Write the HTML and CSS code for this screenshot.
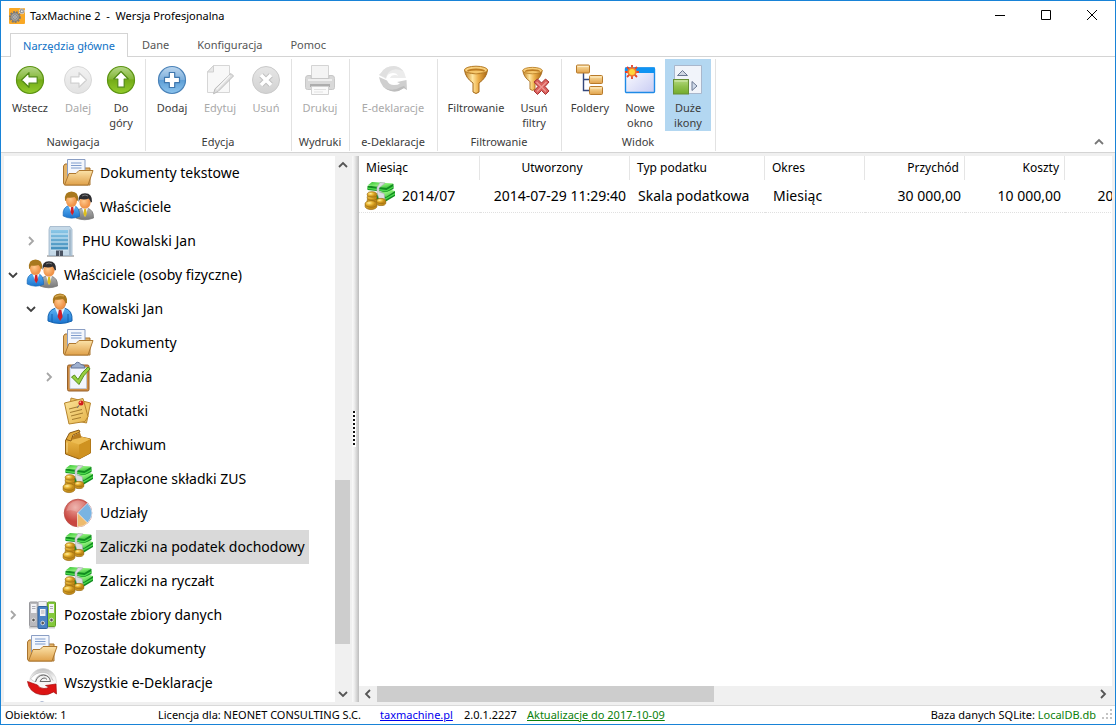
FILE: index.html
```html
<!DOCTYPE html>
<html lang="pl">
<head>
<meta charset="utf-8">
<title>TaxMachine 2</title>
<link rel="stylesheet" href="styles.css">
</head>
<body>
<svg class="sprite" aria-hidden="true">
  <defs>
    <linearGradient id="g-green" x1="0" y1="0" x2="0" y2="1"><stop offset="0" stop-color="#b5d68a"/><stop offset=".45" stop-color="#86b83a"/><stop offset=".5" stop-color="#74ab17"/><stop offset="1" stop-color="#93cc2c"/></linearGradient>
    <linearGradient id="g-blue" x1="0" y1="0" x2="0" y2="1"><stop offset="0" stop-color="#bcd6ee"/><stop offset=".48" stop-color="#7fb0dc"/><stop offset=".52" stop-color="#5f9fd6"/><stop offset="1" stop-color="#8cc4ee"/></linearGradient>
    <linearGradient id="g-gray" x1="0" y1="0" x2="0" y2="1"><stop offset="0" stop-color="#e6e6e6"/><stop offset="1" stop-color="#d2d2d2"/></linearGradient>
    <linearGradient id="g-pale" x1="0" y1="0" x2="0" y2="1"><stop offset="0" stop-color="#f2f2f2"/><stop offset="1" stop-color="#e2e2e2"/></linearGradient>
    <linearGradient id="g-folder" x1="0" y1="0" x2="0" y2="1"><stop offset="0" stop-color="#fbe2a8"/><stop offset="1" stop-color="#e0a14a"/></linearGradient>
    <linearGradient id="g-gold" x1="0" y1="0" x2="1" y2="0"><stop offset="0" stop-color="#c07c1c"/><stop offset=".35" stop-color="#ffe6a0"/><stop offset=".6" stop-color="#edb04a"/><stop offset="1" stop-color="#a86410"/></linearGradient>
    <linearGradient id="g-box" x1="0" y1="0" x2="0" y2="1"><stop offset="0" stop-color="#f0bd4e"/><stop offset="1" stop-color="#c98a1c"/></linearGradient>
    <linearGradient id="g-suit" x1="0" y1="0" x2="0" y2="1"><stop offset="0" stop-color="#5db4f5"/><stop offset="1" stop-color="#1a74cf"/></linearGradient>
    <linearGradient id="g-greysuit" x1="0" y1="0" x2="0" y2="1"><stop offset="0" stop-color="#b4b4b4"/><stop offset="1" stop-color="#787878"/></linearGradient>
    <radialGradient id="g-face" cx=".4" cy=".4"><stop offset="0" stop-color="#ffc98c"/><stop offset="1" stop-color="#f0944a"/></radialGradient>
    <linearGradient id="g-building" x1="0" y1="0" x2="0" y2="1"><stop offset="0" stop-color="#8cc8e8"/><stop offset="1" stop-color="#3f8cba"/></linearGradient>
    <linearGradient id="g-note" x1="0" y1="0" x2="1" y2="1"><stop offset="0" stop-color="#fbe59c"/><stop offset="1" stop-color="#e6b44a"/></linearGradient>
    <linearGradient id="g-window" x1="0" y1="0" x2="1" y2="1"><stop offset="0" stop-color="#ffffff"/><stop offset="1" stop-color="#c8ccf4"/></linearGradient>
    <linearGradient id="g-bill" x1="0" y1="0" x2="1" y2="1"><stop offset="0" stop-color="#2fc02f"/><stop offset=".5" stop-color="#8cf078"/><stop offset="1" stop-color="#28b42c"/></linearGradient>
    <radialGradient id="g-red" cx=".4" cy=".3"><stop offset="0" stop-color="#eba29a"/><stop offset="1" stop-color="#c9463f"/></radialGradient>
    <linearGradient id="g-sphere" x1="0" y1="0" x2="0" y2="1"><stop offset="0" stop-color="#bdbdbd"/><stop offset=".35" stop-color="#f4f4f4"/><stop offset="1" stop-color="#ffffff"/></linearGradient>
    <linearGradient id="g-square" x1="0" y1="0" x2="0" y2="1"><stop offset="0" stop-color="#b4d880"/><stop offset=".5" stop-color="#8fc04c"/><stop offset="1" stop-color="#74ac2c"/></linearGradient>
    <radialGradient id="g-coin" cx=".35" cy=".35"><stop offset="0" stop-color="#fff0a4"/><stop offset=".5" stop-color="#eebc3c"/><stop offset="1" stop-color="#c48c18"/></radialGradient>
  </defs>

  <symbol id="i-app" viewBox="0 0 16 16">
    <rect width="16" height="16" rx="1" fill="#f9a825"/>
    <circle cx="6" cy="9" r="5" fill="none" stroke="#7a7a7a" stroke-width="1.800" stroke-dasharray="1.900 1.100"/>
    <circle cx="6" cy="9" r="4.200" fill="#a6a6a6" stroke="#6c6c6c" stroke-width=".8"/><circle cx="6" cy="9" r="2.100" fill="#e4e4e4" stroke="#666" stroke-width=".7"/><circle cx="6" cy="9" r=".8" fill="#555"/>
    <circle cx="12.800" cy="3.200" r="2.500" fill="#8c8c8c" stroke="#dedede" stroke-width="1.200" stroke-dasharray="1.200 .8"/><circle cx="12.800" cy="3.200" r="1" fill="#e8e8e8"/>
  </symbol>
  <symbol id="i-arrow" viewBox="0 0 32 32">
    <path d="M7.500 16 15 8.700v4.100h8.200v6.400H15v4.100z" fill="#fff" stroke="currentColor" stroke-width="1.200" stroke-linejoin="round"/>
  </symbol>
  <symbol id="i-back" viewBox="0 0 32 32">
    <circle cx="16" cy="16" r="13.500" fill="url(#g-green)" stroke="#5c9412" stroke-width="1.200"/>
    <use href="#i-arrow" color="#518a14"/>
  </symbol>
  <symbol id="i-forward" viewBox="0 0 32 32">
    <circle cx="16" cy="16" r="13.500" fill="url(#g-pale)" stroke="#d8d8d8"/>
    <use href="#i-arrow" color="#d0d0d0" transform="rotate(180 16 16)"/>
  </symbol>
  <symbol id="i-up" viewBox="0 0 32 32">
    <circle cx="16" cy="16" r="13.500" fill="url(#g-green)" stroke="#5c9412" stroke-width="1.200"/>
    <use href="#i-arrow" color="#518a14" transform="rotate(90 16 16)"/>
  </symbol>
  <symbol id="i-add" viewBox="0 0 32 32">
    <circle cx="16" cy="16" r="13.500" fill="url(#g-blue)" stroke="#4a82b8" stroke-width="1.200"/>
    <path d="M13.300 8.500h5.400v4.800h4.800v5.400h-4.800v4.800h-5.400v-4.800H8.500v-5.400h4.800z" fill="#fff" stroke="#3f77ae" stroke-width="1.200" stroke-linejoin="round"/>
  </symbol>
  <symbol id="i-edit" viewBox="0 0 32 32">
    <path d="M9.500 1.500h16v27h-22V8z" fill="#f8f8f8" stroke="#d6d6d6"/><path d="M9.500 1.500v6.500h-6z" fill="#e8e8e8" stroke="#d0d0d0"/>
    <path d="M27 9.500l2.500 2.500L14 27.500l-4.500 2.300 1.500-5z" fill="#dedede" stroke="#bcbcbc"/><path d="M26 11.500 12.500 25.500" stroke="#f6f6f6" stroke-width="1.400"/>
  </symbol>
  <symbol id="i-remove" viewBox="0 0 32 32">
    <circle cx="16" cy="16" r="13.500" fill="url(#g-gray)" stroke="#cacaca"/>
    <path d="M11.200 11.200l9.600 9.600m0-9.600-9.600 9.600" stroke="#c0c0c0" stroke-width="5.500"/><path d="M11 11l10 10m0-10L11 21" stroke="#fff" stroke-width="3.600"/>
  </symbol>
  <symbol id="i-print" viewBox="0 0 32 32">
    <path d="M7.500 1.500h17v13h-17z" fill="#f4f4f4" stroke="#d4d4d4"/>
    <path d="M4 11.500h3v3h18v-3h3q2.500 0 2.500 3v9q0 2-2 2h-25q-2 0-2-2v-9q0-3 2.500-3z" fill="#d9d9d9" stroke="#c8c8c8"/>
    <path d="M4 16h24" stroke="#efefef" stroke-width="2"/><path d="M6 21.500h20" stroke="#adadad" stroke-width="3"/>
    <path d="M7.500 22.500h17v8h-17z" fill="#fafafa" stroke="#d2d2d2"/><path d="M10 25.500h12M10 28h9" stroke="#e2e2e2"/>
  </symbol>
  <symbol id="i-edek-gray" viewBox="0 0 32 32">
    <path d="M4 9Q8 2 17 2q10 1 12 12H13q1-3 5-3 2 0 3 1-1-3-5-3-6 0-7 6L2 11z" fill="#ececec"/>
    <path d="M4 9Q8 2 17 2q6 .5 9 5-9-4-14 1-2 2-3 6L2 11z" fill="#e0e0e0"/>
    <path d="M2 13l8 3.500Q12 21 17 21q4 0 6-1.500L20 18l9.500-2 .5 10-3-2q-6 4.500-13 3Q4 25 2 13z" fill="#cfcfcf"/>
    <path d="M8 24q8 4 16-1l3-1 3 4-3-2q-6 4.500-13 3-4-.8-6-3z" fill="#bdbdbd"/>
  </symbol>
  <symbol id="i-funnel" viewBox="0 0 32 32">
    <path d="M4.500 6q1 8 8.500 13v9q3 3 6 0v-9q7.500-5 8.500-13z" fill="url(#g-gold)" stroke="#a4691a"/>
    <ellipse cx="16" cy="6" rx="11.500" ry="3.800" fill="#f8cf7c" stroke="#b57b24"/><ellipse cx="16" cy="6.800" rx="9" ry="2.300" fill="#bd7c22"/><path d="M7.500 7.400q8.500 3.600 17 0-8.500-2-17 0z" fill="#f5c66a"/>
  </symbol>
  <symbol id="i-nofilter" viewBox="0 0 32 32">
    <use href="#i-funnel" x="1" y="0" width="27" height="30"/>
    <path d="M16 18l3.500-3 4 4 4-4 3.500 3-4 4.500 4 4.500-3.500 3.500-4-4-4 4-3.500-3.500 4-4.500z" fill="#d9605c" stroke="#a83434"/><path d="M18.500 18l9.500 9.500m.5-9.500-9.500 9.500" stroke="#ef9a94" stroke-width="1.300"/>
  </symbol>
  <symbol id="i-tree" viewBox="0 0 32 32">
    <path d="M9.500 9v17.500H17M9.500 15.500H17" fill="none" stroke="#34487c" stroke-width="1.400"/>
    <g fill="url(#g-folder)" stroke="#b87a2a"><rect x="2.500" y="1" width="13" height="8" rx="1"/><rect x="15.500" y="11.500" width="13" height="8" rx="1"/><rect x="15.500" y="22.500" width="13" height="8" rx="1"/></g>
    <path d="M3.500 2.500h11M16.500 13h11M16.500 24h11" stroke="#fdebc4"/>
  </symbol>
  <symbol id="i-newwin" viewBox="0 0 32 32">
    <rect x="1.500" y="4" width="29" height="24.500" rx="1" fill="url(#g-window)" stroke="#1e8ae6" stroke-width="1.400"/><path d="M1 3.500h30V9H1z" fill="#0f93f2"/>
    <g stroke="#e4432c" stroke-width="1.800"><path d="M8 1v14M1 8h14M3 3l10 10M13 3 3 13"/></g><circle cx="8" cy="8" r="4.700" fill="#f07a30"/><circle cx="8" cy="8" r="3" fill="#ffd63c"/>
  </symbol>
  <symbol id="i-bigicons" viewBox="0 0 32 32">
    <path d="M2.500 1.500h27v28h-14v-14h-13z" fill="#f1f4fa" stroke="#a9b7cc"/><rect x="1.500" y="15.500" width="15" height="14.500" fill="url(#g-square)" stroke="#668f34"/><path d="M2.500 17h13" stroke="#d6ecb4"/>
    <path d="M5.500 11.500l5-5 5 5z" fill="#cfd6e2" stroke="#6b7892"/><path d="M20 17.500l5 4.500-5 4.500z" fill="#cfdaea" stroke="#6b7892"/>
  </symbol>
  <symbol id="i-folder" viewBox="0 0 32 32">
    <path d="M1.500 9l1.500-2h3v-1h16v5h6v17h-24q-2.500 0-2.500-2z" fill="#e5b468" stroke="#a87430"/>
    <path d="M5.500 2.500h17.500v17H5.500z" fill="#f4f7fd" stroke="#8a9ec4"/><path d="M9 6h10.500M9 8.500h10.500M9 11h10.500" stroke="#7f9ccc"/>
    <path d="M7 16.500h7l3-3h14l-5 14.500H2.500z" fill="url(#g-folder)" stroke="#ae7830" stroke-linejoin="round"/>
  </symbol>
  <symbol id="i-person" viewBox="0 0 32 32">
    <path d="M4 28q-1-11 8-13h8q9 2 8 13-12 5-24 0z" fill="url(#g-suit)" stroke="#1563b0"/><path d="M11 15l5 12 5-12z" fill="#e8f1fb"/><path d="M14.800 17h2.600l1.200 7-2.500 4-2.500-4z" fill="#cf1f28"/>
    <path d="M8 21v8m16-8v8" stroke="#1460ac"/>
    <ellipse cx="16" cy="9.500" rx="5.800" ry="7" fill="url(#g-face)" stroke="#c4742e" stroke-width=".6"/><path d="M9 10Q7.500 1 16 .6q8 .4 7 9.400l-1.500.5q-1-4-3-4.500-4 1-7 .4-1.500 1.600-1.500 4z" fill="#a8781e"/><path d="M11 4q4-3 9-1" fill="none" stroke="#d2a44c" stroke-width="1.400"/>
  </symbol>
  <symbol id="i-people" viewBox="0 0 32 32">
    <path d="M14 27q-1-8 6-10h5q7 2 6.500 10-9 3.500-17.500 0z" fill="url(#g-greysuit)" stroke="#6e6e6e" stroke-width=".7"/><path d="M20 17l3 9 3-9z" fill="#f6f6f6"/><path d="M22.200 18h1.800l.8 5-1.700 3-1.700-3z" fill="#e0c01c"/>
    <ellipse cx="23" cy="11.500" rx="5.600" ry="6.200" fill="url(#g-face)"/><path d="M16.500 11q-1-8.500 6.500-8.700 7.500.2 7 8.700l-1.200.5q-.8-3-2.300-4-3 1.500-8.500.5z" fill="#2c2c30"/><path d="M20 5q3-2 6 0" fill="none" stroke="#777" stroke-width="1"/>
    <path d="M1.200 25q-1-9 6.100-10.500h4.500Q18 16 17.500 25.500q-8.500 3.500-16.300-.5z" fill="url(#g-suit)" stroke="#1769b8" stroke-width=".7"/><path d="M6.500 15l3.500 9 3.500-9z" fill="#e8f1fb"/><path d="M9.200 16h2l.8 5-1.800 3.500L8.400 21z" fill="#d01f28"/>
    <ellipse cx="9.500" cy="9.500" rx="5.600" ry="6.600" fill="url(#g-face)"/><path d="M3 9.500Q2 .8 9.500.6q7.500.2 6.500 8.900l-1.200.5q-.8-3-2.300-4-3 1.200-7 .6Q4 8 4 10z" fill="#a8781e"/>
  </symbol>
  <symbol id="i-building" viewBox="0 0 32 32">
    <path d="M3 31h27" stroke="#bcbcbc" stroke-width="2"/>
    <path d="M6 1.500h20l2 3v26H5v-26z" fill="#c5d9e8" stroke="#9db2c6" stroke-width=".8"/>
    <path d="M7 5h17v20H7z" fill="url(#g-building)"/><path d="M7 9h17M7 13h17M7 17h17M7 21h17M7 25h17" stroke="#dceef8" stroke-width="1"/>
    <path d="M26 4.500v25.500" stroke="#a4bacc" stroke-width="2"/><rect x="12" y="25.500" width="7" height="5.500" fill="#4a5362"/><path d="M15.500 26v5" stroke="#a4aebb"/>
  </symbol>
  <symbol id="i-tasks" viewBox="0 0 32 32">
    <rect x="5.500" y="4" width="21.500" height="26" rx="1.500" fill="#cf8c42" stroke="#96602a"/><path d="M8 6.500h16.500v21H8z" fill="#f3f6fd" stroke="#bcc6dc" stroke-width=".8"/>
    <path d="M9 7q0-3.500 3.500-3.500 3-4.500 6.500 0 4 0 4 3.500z" fill="#9fb0ce" stroke="#62759c"/>
    <path d="M9.500 16l3-2 3.500 4.500Q20 10.500 26 6q1.500.5 2 2Q21 14 17 23.500z" fill="#97cf3e" stroke="#558e1c" stroke-linejoin="round"/>
  </symbol>
  <symbol id="i-notes" viewBox="0 0 32 32">
    <path d="M9 3l19.500 5-4 20-18-4z" fill="#f0c868" stroke="#b98630" stroke-linejoin="round"/>
    <path d="M2.500 8L21 3.500l5 18-3 5L7 29z" fill="url(#g-note)" stroke="#b5842c" stroke-linejoin="round"/>
    <path d="M7 14l10-2.500M8 17.500l12-3M9 21l12-3M10 24.500l9-2" stroke="#a47b2e"/><path d="M18 9l-3 4" stroke="#777"/><circle cx="19" cy="8" r="2.500" fill="#d01d1d"/><circle cx="18.300" cy="7.200" r=".9" fill="#ff9b8b"/>
  </symbol>
  <symbol id="i-box" viewBox="0 0 32 32">
    <path d="M3.500 11l11-4 14 3v14L17 30 3.500 25z" fill="url(#g-box)" stroke="#946112" stroke-linejoin="round"/>
    <path d="M17 15.500l11.500-5.500v14L17 30z" fill="#cf9220"/><path d="M3.500 11L17 15.500l11.500-5.500-12-3z" fill="#edbc52"/>
    <path d="M4 10.500L7.500 4 17 1l1 2-7 3-2 6z" fill="#e2a838" stroke="#8a5a14" stroke-linejoin="round"/><path d="M9 11l3-5 6-2.500 1.500 5z" fill="#b87c1e"/><path d="M5 13.500v10" stroke="#f7d98c"/>
  </symbol>
  <symbol id="i-money" viewBox="0 0 32 32">
    <path d="M11 15l20-4v5l-10 6-9-1z" fill="#128c20"/><path d="M12 14l12-5 7 2-9 6z" fill="url(#g-bill)"/><path d="M21 18.500l10-5.500v1.500L21 20z" fill="#4cd94c"/>
    <path d="M3.500 6l26-2v5l-7 3-19-2z" fill="#128c20"/><path d="M3.500 5.500L8 2l21.500 1.500-7 4.500z" fill="url(#g-bill)"/><path d="M3.500 7.500l19 2.500 7-4v1.500l-7 4-19-2.500z" fill="#4cd94c"/>
    <path d="M16 2.500l5 .5-6 5v4l5 1.500 1 6-5 1.500-2-5-1-4V7.500z" fill="#dcdce2" stroke="#a8a8b2" stroke-width=".6"/>
    <g fill="url(#g-coin)" stroke="#9a6c10" stroke-width=".7"><ellipse cx="17" cy="22.800" rx="4.800" ry="2.800"/><ellipse cx="17" cy="21" rx="4.800" ry="2.600"/><ellipse cx="8" cy="20.500" rx="4.800" ry="3"/><ellipse cx="8" cy="17.500" rx="4.800" ry="3"/><ellipse cx="8" cy="14.500" rx="4.800" ry="2.800"/><ellipse cx="7" cy="26" rx="6" ry="3.600"/><ellipse cx="7" cy="24" rx="6" ry="3.400"/></g>
  </symbol>
  <symbol id="i-pie" viewBox="0 0 32 32">
    <circle cx="16" cy="16" r="13.800" fill="url(#g-red)" stroke="#b84a44" stroke-width=".8"/>
    <path d="M15.500 16L25.500 6q9 10 0 20z" fill="#7ab4e2" stroke="#e8f0f8" stroke-width=".7"/><path d="M15.500 16l10 10q-4 4-10 3.800z" fill="#eebb6e" stroke="#f8ecd8" stroke-width=".7"/><path d="M4.500 14Q6 5 16 3.500q5 0 8 2.500l-9 9q-5-3-10.500-1z" fill="#fff" opacity=".2"/>
  </symbol>
  <symbol id="i-binders" viewBox="0 0 32 32">
    <path d="M3 28.500h26" stroke="#cfcfcf" stroke-width="2"/>
    <rect x="3.500" y="3" width="8.500" height="24.500" rx="1" fill="#b9b9bd" stroke="#98989c"/><rect x="21.500" y="3" width="8" height="24.500" rx="1" fill="#84c83c" stroke="#63a026"/><path d="M12.500 2.500h8v7h-8z" fill="#f2f2f4" stroke="#c4c4c8"/><rect x="12" y="7.500" width="9.500" height="22" rx="1" fill="#4a82c4" stroke="#2e609c"/>
    <g fill="#f3f3f6"><rect x="5" y="5" width="5.500" height="9"/><rect x="23" y="5" width="5" height="9"/><rect x="14" y="10" width="5.500" height="7"/></g><path d="M6 7.500h3.500M6 9.500h3.500M24 7.500h3M24 9.500h3M15 12h3.500M15 14h3.500" stroke="#9a9aa4" stroke-width=".8"/>
    <g fill="#555" stroke="#eee" stroke-width=".8"><circle cx="7.500" cy="21" r="1.800"/><circle cx="25.500" cy="21" r="1.800"/><circle cx="16.700" cy="24" r="1.800"/></g>
  </symbol>
  <symbol id="i-edek" viewBox="0 0 32 32">
    <circle cx="17" cy="15" r="13.500" fill="url(#g-sphere)" stroke="#d4d4d4" stroke-width=".6"/>
    <path d="M4.500 12Q9 5 18 5.500q6 .5 9 8Q22 7 16 7.500q-6 .5-7 7.500z" fill="#fff" stroke="#b4b4b4" stroke-width=".6"/>
    <path d="M9.500 15q2-7 8-7 6 .5 7 6.500H14q1.500-3.500 4-3.500 2 0 3 1.500" fill="none" stroke="#6a6a6a" stroke-width="1"/>
    <path d="M1.500 14.500l10 3.500q2 3.500 6.500 3.500 3 0 5-1.500l-3.500-1.500L30 17l.5 10-3-2q-6 4-13 2.500Q3 25.500 1.500 14.500z" fill="#dc1414" stroke="#a80c0c" stroke-width=".7"/>
  </symbol>
  <symbol id="i-blueball" viewBox="0 0 32 32"><circle cx="16" cy="9" r="8" fill="#6a86c4" stroke="#48649c"/></symbol>
  <symbol id="i-chev" viewBox="0 0 10 10"><path d="M3 1l4 4-4 4" fill="none" stroke="currentColor" stroke-width="1.800"/></symbol>
</svg>

<div class="window">
  <header class="titlebar">
    <svg class="app-icon"><use href="#i-app"/></svg>
    <span class="title">TaxMachine 2 &nbsp;- &nbsp;Wersja Profesjonalna</span>
    <div class="caption-buttons">
      <button type="button" aria-label="Minimalizuj"><svg viewBox="0 0 12 12"><path d="M1 5.500h10" stroke="#000"/></svg></button>
      <button type="button" aria-label="Maksymalizuj"><svg viewBox="0 0 12 12"><path d="M1.500 .5h9v9h-9z" fill="none" stroke="#000"/></svg></button>
      <button type="button" aria-label="Zamknij"><svg viewBox="0 0 12 12"><path d="M1 0l10 10M11 0 1 10" stroke="#000"/></svg></button>
    </div>
  </header>

  <nav class="tabs">
    <button type="button" class="tab tab-active">Narzędzia główne</button>
    <button type="button" class="tab">Dane</button>
    <button type="button" class="tab">Konfiguracja</button>
    <button type="button" class="tab">Pomoc</button>
  </nav>

  <section class="ribbon">
    <div class="group">
      <div class="tools">
        <button type="button" class="tool w50"><svg><use href="#i-back"/></svg>Wstecz</button>
        <button type="button" class="tool w46" disabled><svg><use href="#i-forward"/></svg>Dalej</button>
        <button type="button" class="tool w40"><svg><use href="#i-up"/></svg>Do<br>góry</button>
      </div>
      <div class="group-name">Nawigacja</div>
    </div>
    <div class="group">
      <div class="tools">
        <button type="button" class="tool w46"><svg><use href="#i-add"/></svg>Dodaj</button>
        <button type="button" class="tool w50" disabled><svg><use href="#i-edit"/></svg>Edytuj</button>
        <button type="button" class="tool w42" disabled><svg><use href="#i-remove"/></svg>Usuń</button>
      </div>
      <div class="group-name">Edycja</div>
    </div>
    <div class="group">
      <div class="tools">
        <button type="button" class="tool w50" disabled><svg><use href="#i-print"/></svg>Drukuj</button>
      </div>
      <div class="group-name">Wydruki</div>
    </div>
    <div class="group">
      <div class="tools">
        <button type="button" class="tool w80" disabled><svg><use href="#i-edek-gray"/></svg>E-deklaracje</button>
      </div>
      <div class="group-name">e-Deklaracje</div>
    </div>
    <div class="group">
      <div class="tools">
        <button type="button" class="tool w70"><svg><use href="#i-funnel"/></svg>Filtrowanie</button>
        <button type="button" class="tool w46"><svg><use href="#i-nofilter"/></svg>Usuń<br>filtry</button>
      </div>
      <div class="group-name">Filtrowanie</div>
    </div>
    <div class="group">
      <div class="tools">
        <button type="button" class="tool w50"><svg><use href="#i-tree"/></svg>Foldery</button>
        <button type="button" class="tool w50"><svg><use href="#i-newwin"/></svg>Nowe<br>okno</button>
        <button type="button" class="tool w46 tool-on" aria-pressed="true"><svg><use href="#i-bigicons"/></svg>Duże<br>ikony</button>
      </div>
      <div class="group-name">Widok</div>
    </div>
    <button type="button" class="collapse" aria-label="Zwiń wstążkę"><svg class="chev up"><use href="#i-chev"/></svg></button>
  </section>

  <main class="work">
    <aside class="tree-pane">
      <ul class="tree">
        <li class="node level-2"><span class="twist"></span><svg><use href="#i-folder"/></svg><a href="#n1">Dokumenty tekstowe</a></li>
        <li class="node level-2"><span class="twist"></span><svg><use href="#i-people"/></svg><a href="#n2">Właściciele</a></li>
        <li class="node level-1"><button type="button" class="twist" aria-label="Rozwiń"><svg class="chev"><use href="#i-chev"/></svg></button><svg><use href="#i-building"/></svg><a href="#n3">PHU Kowalski Jan</a></li>
        <li class="node"><button type="button" class="twist" aria-label="Zwiń"><svg class="chev down"><use href="#i-chev"/></svg></button><svg><use href="#i-people"/></svg><a href="#n4">Właściciele (osoby fizyczne)</a></li>
        <li class="node level-1"><button type="button" class="twist" aria-label="Zwiń"><svg class="chev down"><use href="#i-chev"/></svg></button><svg><use href="#i-person"/></svg><a href="#n5">Kowalski Jan</a></li>
        <li class="node level-2"><span class="twist"></span><svg><use href="#i-folder"/></svg><a href="#n6">Dokumenty</a></li>
        <li class="node level-2"><button type="button" class="twist" aria-label="Rozwiń"><svg class="chev"><use href="#i-chev"/></svg></button><svg><use href="#i-tasks"/></svg><a href="#n7">Zadania</a></li>
        <li class="node level-2"><span class="twist"></span><svg><use href="#i-notes"/></svg><a href="#n8">Notatki</a></li>
        <li class="node level-2"><span class="twist"></span><svg><use href="#i-box"/></svg><a href="#n9">Archiwum</a></li>
        <li class="node level-2"><span class="twist"></span><svg><use href="#i-money"/></svg><a href="#n10">Zapłacone składki ZUS</a></li>
        <li class="node level-2"><span class="twist"></span><svg><use href="#i-pie"/></svg><a href="#n11">Udziały</a></li>
        <li class="node level-2"><span class="twist"></span><svg><use href="#i-money"/></svg><a href="#n12" class="selected">Zaliczki na podatek dochodowy</a></li>
        <li class="node level-2"><span class="twist"></span><svg><use href="#i-money"/></svg><a href="#n13">Zaliczki na ryczałt</a></li>
        <li class="node"><button type="button" class="twist" aria-label="Rozwiń"><svg class="chev"><use href="#i-chev"/></svg></button><svg><use href="#i-binders"/></svg><a href="#n14">Pozostałe zbiory danych</a></li>
        <li class="node"><span class="twist"></span><svg><use href="#i-folder"/></svg><a href="#n15">Pozostałe dokumenty</a></li>
        <li class="node"><span class="twist"></span><svg><use href="#i-edek"/></svg><a href="#n16">Wszystkie e-Deklaracje</a></li>
        <li class="node"><span class="twist"></span><svg><use href="#i-blueball"/></svg></li>
      </ul>
      <div class="vscroll">
        <button type="button" aria-label="W górę"><svg class="chev up"><use href="#i-chev"/></svg></button>
        <div class="track"><div class="thumb"></div></div>
        <button type="button" aria-label="W dół"><svg class="chev down"><use href="#i-chev"/></svg></button>
      </div>
    </aside>
    <div class="splitter"><div class="grip"></div></div>
    <section class="list-pane">
      <div class="list">
        <table>
          <colgroup><col class="c121"><col class="c150"><col class="c135"><col class="c100"><col class="c100"><col class="c100"><col class="c100"></colgroup>
          <thead><tr><th>Miesiąc</th><th class="mid">Utworzony</th><th>Typ podatku</th><th>Okres</th><th class="num">Przychód</th><th class="num">Koszty</th><th></th></tr></thead>
          <tbody><tr><td><div class="first"><svg><use href="#i-money"/></svg>2014/07</div></td><td class="num">2014-07-29 11:29:40</td><td>Skala podatkowa</td><td>Miesiąc</td><td class="num">30 000,00</td><td class="num">10 000,00</td><td class="num">20 000,00</td></tr></tbody>
        </table>
      </div>
      <div class="hscroll">
        <button type="button" aria-label="W lewo"><svg class="chev left"><use href="#i-chev"/></svg></button>
        <div class="track"><div class="thumb"></div></div>
        <button type="button" aria-label="W prawo"><svg class="chev"><use href="#i-chev"/></svg></button>
      </div>
    </section>
  </main>

  <footer class="status">
    <span class="count">Obiektów: 1</span>
    <span class="licence">Licencja dla: NEONET CONSULTING S.C.</span>
    <span class="site"><a href="#www">taxmachine.pl</a></span>
    <span class="version">2.0.1.2227</span>
    <a href="#update" class="update">Aktualizacje do 2017-10-09</a>
    <span class="db">Baza danych SQLite: <span class="db-name">LocalDB.db</span></span>
    <svg class="sizer" viewBox="0 0 12 12"><path d="M8 0h2v2H8zM4 4h2v2H4zM8 4h2v2H8zM0 8h2v2H0zM4 8h2v2H4zM8 8h2v2H8z" fill="#c4c4c4"/></svg>
  </footer>
</div>
</body>
</html>
```

FILE: styles.css
```css
* { box-sizing: border-box; }
html, body { height: 100%; }
body {
  margin: 0;
  background: #fff;
  color: #000;
  font: 11px/16px "Noto Sans", "Open Sans", sans-serif;
}
button {
  margin: 0;
  padding: 0;
  border: 0;
  background: none;
  color: inherit;
  font: inherit;
}
.sprite { position: absolute; width: 0; height: 0; }

.window {
  display: flex;
  flex-direction: column;
  height: 100%;
  border: 1px solid #1883d7;
  overflow: hidden;
}

/* Title bar */
.titlebar { display: flex; align-items: center; height: 30px; flex: none; padding-left: 8px; }
.app-icon { width: 16px; height: 16px; margin-right: 5px; }
.caption-buttons { display: flex; margin-left: auto; }
.caption-buttons button { display: grid; place-items: center; width: 46px; height: 30px; }
.caption-buttons svg { width: 12px; height: 12px; }

/* Ribbon */
.tabs {
  display: flex;
  flex: none;
  height: 26px;
  padding: 2px 9px 0;
  border-bottom: 1px solid #d4d4d4;
  color: #555;
}
.tab { height: 24px; padding: 0 14px; border: 0 solid #d4d4d4; }
.tab-active {
  min-width: 118px;
  padding: 0 11px;
  border-width: 1px 1px 0;
  background: #fff;
  color: #0f72c6;
}
.ribbon {
  position: relative;
  display: flex;
  flex: none;
  padding: 2px 1px 1px;
  border-bottom: 1px solid #d4d4d4;
  color: #3b3b3b;
}
.group { padding: 0 4px 0 3px; border-right: 1px solid #e2e2e2; }
.tools { display: flex; height: 72px; }
.tool {
  display: flex;
  flex-direction: column;
  align-items: center;
  padding-top: 5px;
  line-height: 15px;
  white-space: nowrap;
}
.tool svg { width: 32px; height: 32px; flex: none; margin-bottom: 4px; }
.tool:disabled { color: #a9a9a9; }
.tool-on { background: #b3d7f1; }
.w40 { width: 40px; }
.w42 { width: 42px; }
.w46 { width: 46px; }
.w50 { width: 50px; }
.w70 { width: 70px; }
.w80 { width: 80px; }
.group-name { padding: 3px 0 1px; text-align: center; white-space: nowrap; }
.collapse { position: absolute; right: 9px; bottom: 4px; width: 12px; height: 12px; color: #777; }

.chev { display: block; width: 10px; height: 10px; }
.chev.up { transform: rotate(-90deg); }
.chev.down { transform: rotate(90deg); }
.chev.left { transform: rotate(180deg); }

/* Work area */
.work { display: flex; flex: 1; min-height: 0; padding: 3px; background: #f0f0f0; }
.tree-pane { display: flex; width: 346px; flex: none; background: #fff; }
.tree { flex: 1; min-width: 0; margin: 0; padding: 0; overflow: hidden; list-style: none; }
.node { display: flex; align-items: center; height: 34px; font-size: 14px; }
.level-1 { padding-left: 18px; }
.level-2 { padding-left: 36px; }
.node > svg { width: 32px; height: 32px; flex: none; margin: 0 2px 0 4px; }
.node a { padding: 0 4px; color: #000; line-height: 34px; text-decoration: none; white-space: nowrap; }
.node .selected { background: #d9d9d9; }
.twist { display: grid; place-items: center; width: 18px; height: 18px; flex: none; color: #a6a6a6; }
.twist .down { color: #404040; }

.vscroll { display: flex; flex-direction: column; width: 15px; flex: none; background: #f0f0f0; color: #555; }
.vscroll button, .hscroll button { display: grid; place-items: center; width: 15px; height: 17px; flex: none; }
.track { display: flex; flex: 1; }
.vscroll .track { flex-direction: column; }
.vscroll .thumb { height: 32%; margin-top: auto; margin-bottom: 41px; background: #cdcdcd; }

.splitter {
  display: grid;
  place-items: center;
  width: 9px;
  flex: none;
  background: linear-gradient(to right, #f0f0f0 2px, #fafafa 2px, #f0f0f0 4px, #bdbdbd 9px);
}
.grip {
  width: 3px;
  height: 36px;
  background: repeating-linear-gradient(to bottom, #111 0 2px, #fff 2px 4px);
  border-right: 1px solid #fff;
}

.list-pane { display: flex; flex-direction: column; flex: 1; min-width: 0; background: #fff; }
.list { flex: 1; overflow: hidden; }
table { width: 806px; table-layout: fixed; border-collapse: separate; border-spacing: 0; }
.c121 { width: 121px; }
.c150 { width: 150px; }
.c135 { width: 135px; }
.c100 { width: 100px; }
th {
  height: 24px;
  padding: 0 5px 0 7px;
  border-right: 1px solid #e5e5e5;
  font-size: 12px;
  font-weight: 400;
  text-align: left;
}
td {
  height: 33px;
  padding: 0 4px 0 8px;
  border-bottom: 1px dotted #e0e0e0;
  font-size: 14px;
  white-space: nowrap;
}
td:first-child { padding: 0 5px; }
th.mid { padding: 0 5px 0 0; text-align: center; }
.num { text-align: right; }
th.num { text-align: right; }
.first { display: flex; align-items: center; gap: 6px; }
.first svg { width: 32px; height: 32px; flex: none; }

.hscroll { display: flex; height: 16px; flex: none; background: #f0f0f0; color: #555; }
.hscroll button { width: 18px; height: 16px; }
.hscroll .thumb { width: 47%; background: #cdcdcd; }

/* Status bar */
.status {
  display: flex;
  align-items: center;
  flex: none;
  height: 19px;
  padding-left: 4px;
  border-top: 1px solid #d9d9d9;
  white-space: nowrap;
}
.count { min-width: 153px; }
.licence { min-width: 222px; }
.site { min-width: 84px; }
.site a { color: #00e; }
.version { min-width: 63px; }
.update { color: #0a800a; }
.db { margin-left: auto; }
.db-name { color: #0a800a; }
.sizer { width: 12px; height: 12px; margin: 0 1px 0 6px; }
```
